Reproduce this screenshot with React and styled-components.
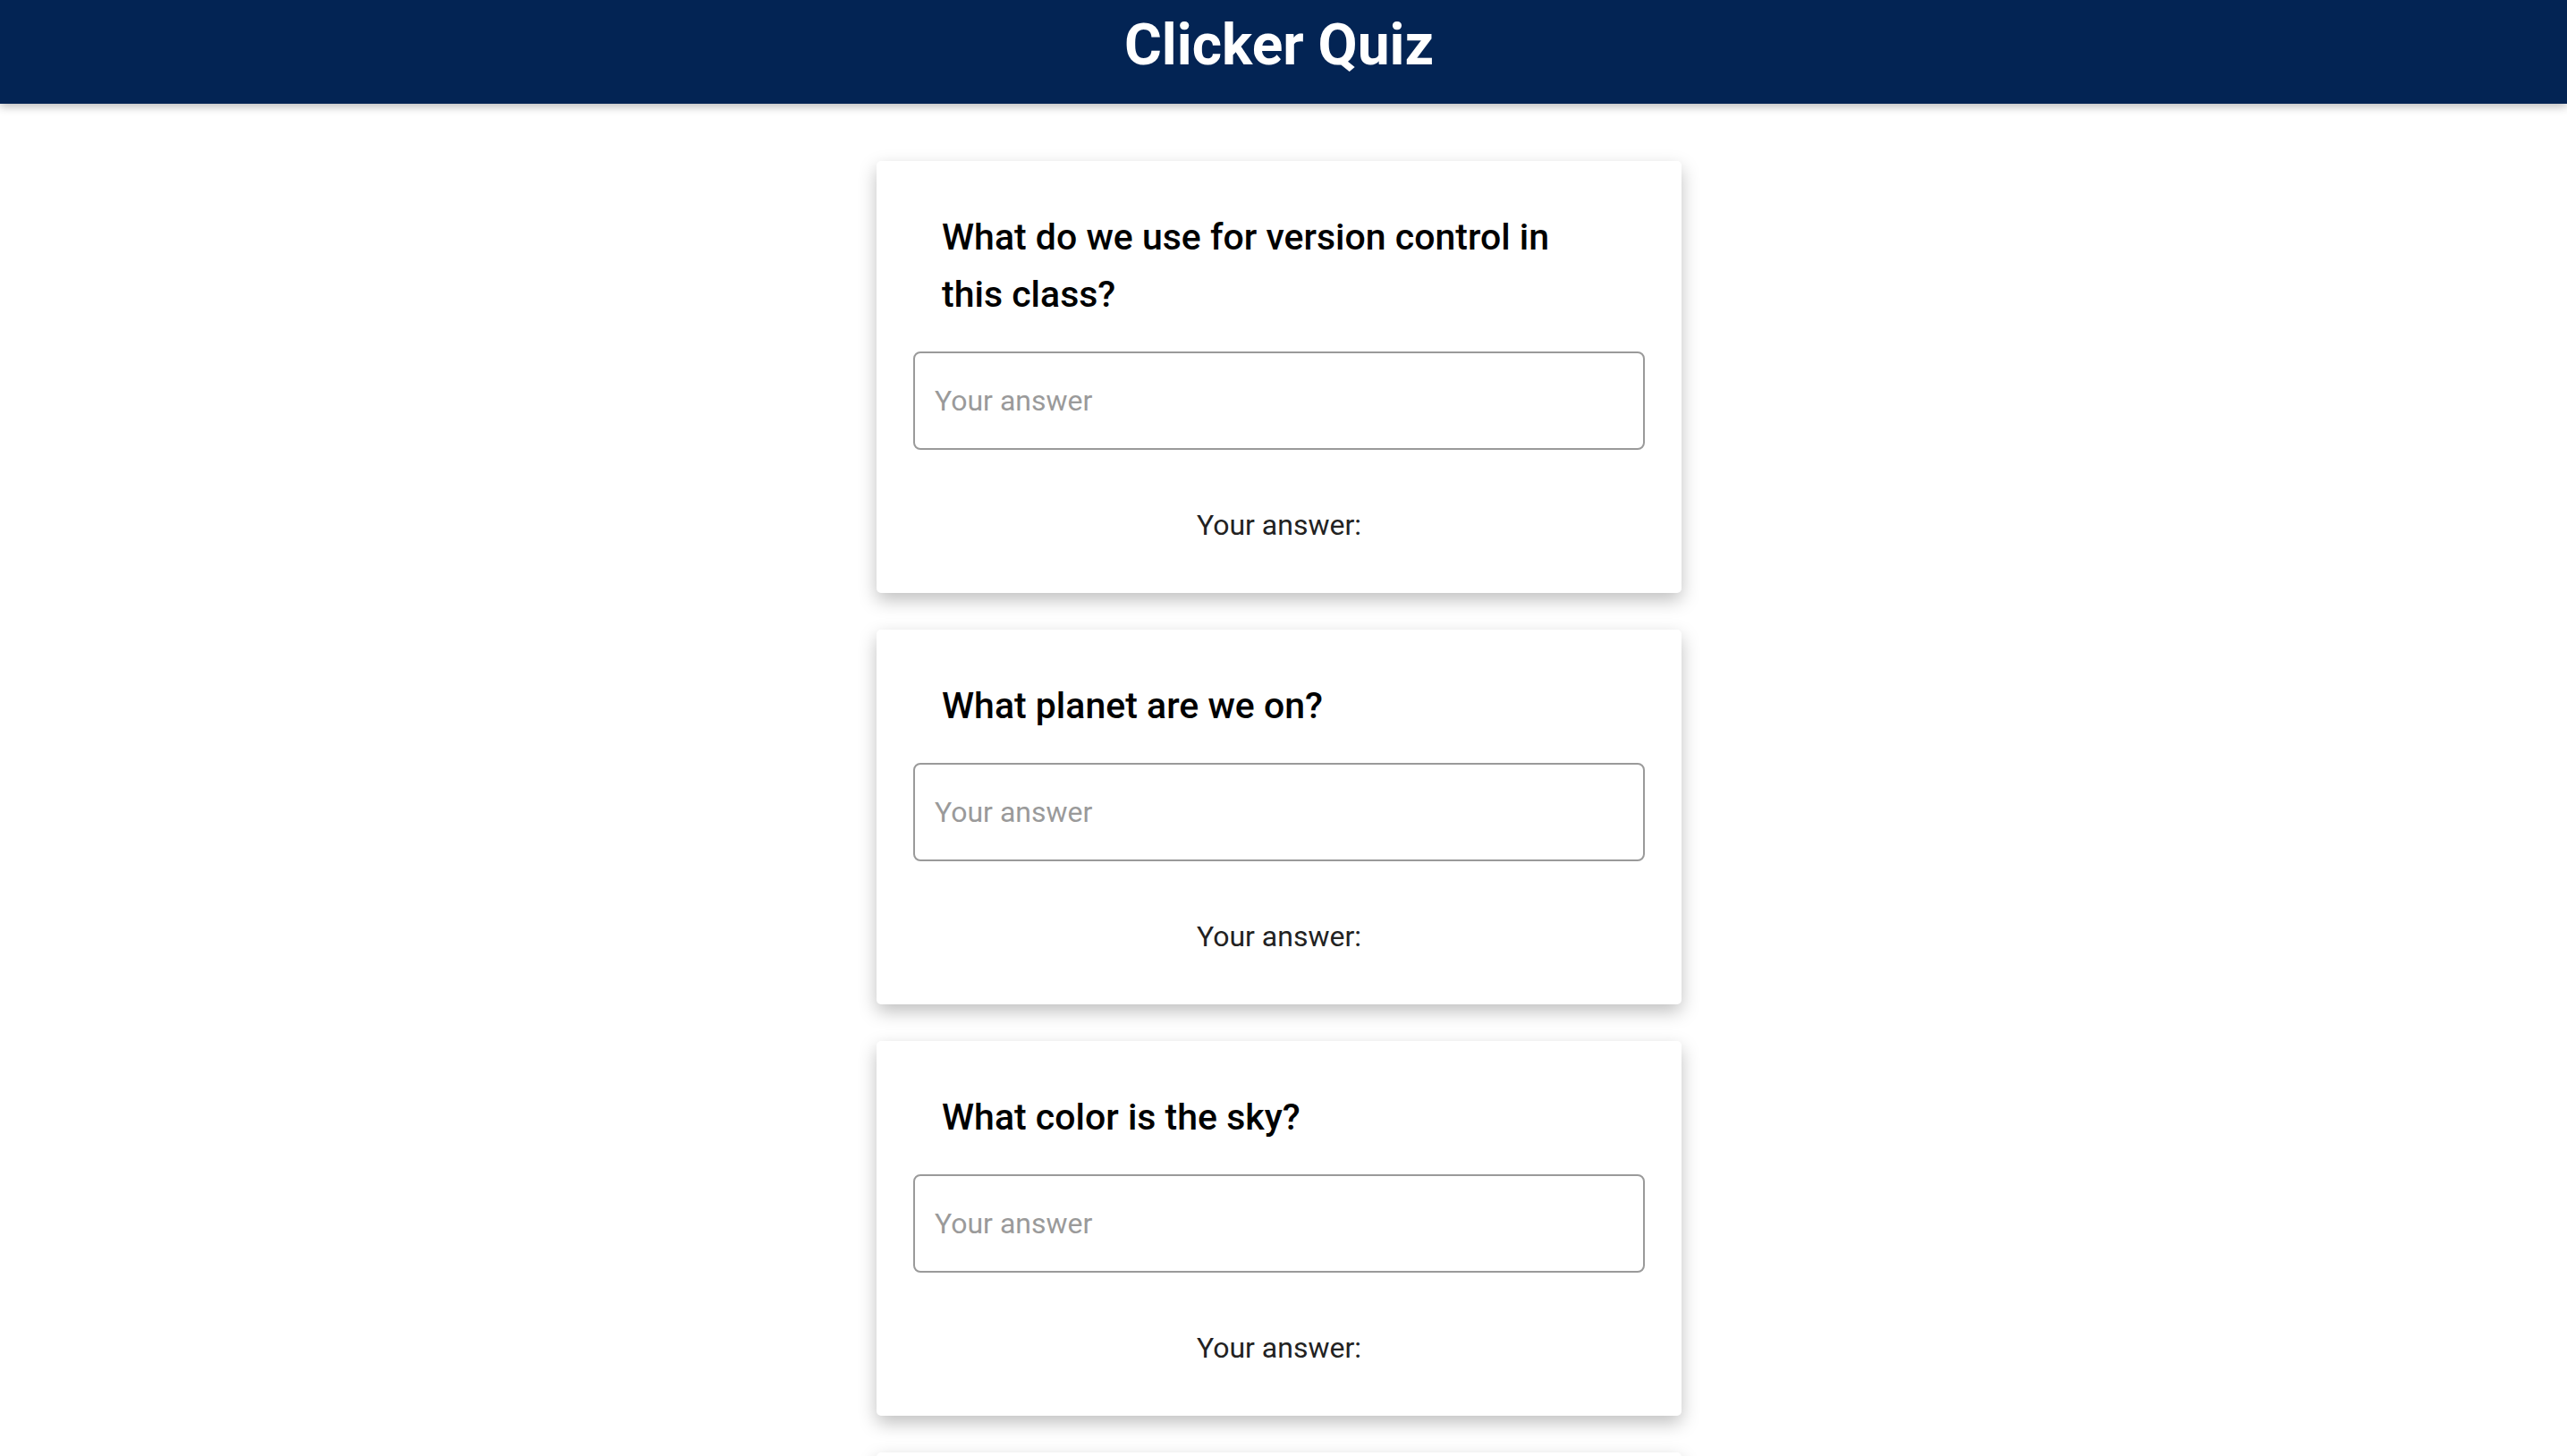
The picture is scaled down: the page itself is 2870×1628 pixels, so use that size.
import React from 'react';
import styled, { createGlobalStyle } from 'styled-components';

const questions = [
  'What do we use for version control in this class?',
  'What planet are we on?',
  'What color is the sky?',
  'What is 2 + 2?',
];

function App() {
  return (
    <>
      <GlobalStyle />
      <Header>
        <Title>Clicker Quiz</Title>
      </Header>
      <Main>
        {questions.map((q) => (
          <Card key={q}>
            <Question>{q}</Question>
            <AnswerInput type="text" placeholder="Your answer" />
            <AnswerLabel>Your answer:</AnswerLabel>
          </Card>
        ))}
      </Main>
    </>
  );
}

const GlobalStyle = createGlobalStyle`
  * {
    box-sizing: border-box;
  }

  body {
    margin: 0;
    background: #ffffff;
    font-family: Roboto, "Liberation Sans", sans-serif;
  }
`;

const Header = styled.header`
  position: relative;
  z-index: 1;
  height: 116px;
  padding: 0 10px 14px 0;
  background-color: #032454;
  box-shadow: 0 3px 10px rgba(0, 0, 0, 0.28);
  text-align: center;
`;

const Title = styled.h1`
  margin: 0;
  font-size: 64px;
  font-weight: 700;
  line-height: 102px;
  color: #ffffff;
`;

const Main = styled.main`
  display: flex;
  flex-direction: column;
  align-items: center;
  gap: 41px;
  padding: 64px 10px 40px 0;
`;

const Card = styled.section`
  display: flex;
  flex-direction: column;
  width: 900px;
  padding: 53px 41px 52px;
  background: #ffffff;
  border-radius: 5px;
  box-shadow: 0 8px 20px rgba(0, 0, 0, 0.25);
`;

const Question = styled.h2`
  margin: 0 0 32px;
  padding: 0 80px 0 32px;
  font-size: 41px;
  font-weight: 500;
  line-height: 64px;
  color: #000000;
`;

const AnswerInput = styled.input`
  width: 100%;
  height: 110px;
  padding: 0 22px;
  border: 2px solid #9a9a9a;
  border-radius: 8px;
  outline: none;
  font-family: Roboto, "Liberation Sans", sans-serif;
  font-size: 32px;
  color: #222222;

  &::placeholder {
    color: #9a9a9a;
  }
`;

const AnswerLabel = styled.p`
  margin: 60px 0 0;
  font-size: 32px;
  line-height: 48px;
  text-align: center;
  color: #222222;
`;

export default App;
